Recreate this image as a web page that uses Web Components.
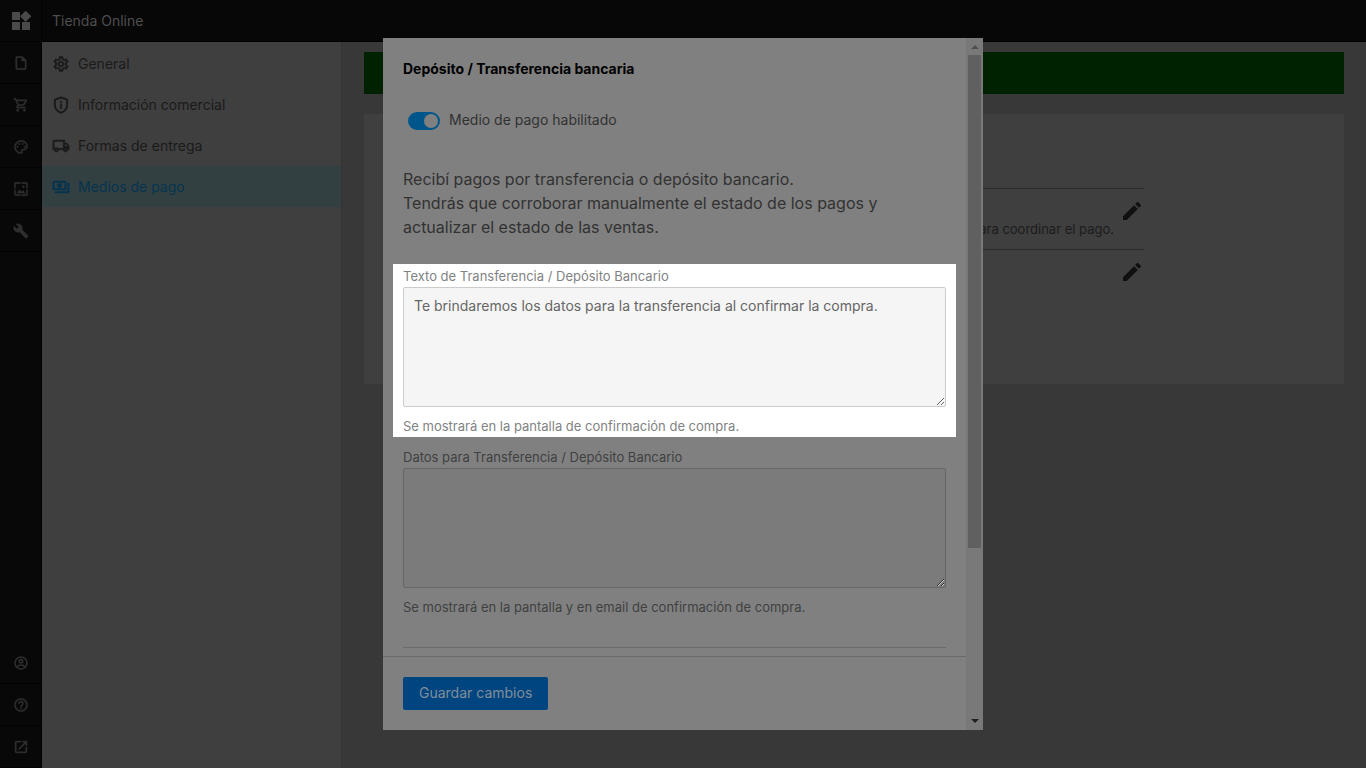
<!DOCTYPE html>
<html lang="es">
<head>
<meta charset="utf-8">
<meta name="viewport" content="width=device-width, initial-scale=1">
<title>Tienda Online</title>
<style>
html, body { margin: 0; height: 100%; }
body { font-family: Inter, "Liberation Sans", sans-serif; font-size: 14px; background: #383838; overflow: hidden; }
</style>
</head>
<body>
<store-admin></store-admin>
<script>
const ICONS = {
  widgets: '<path d="M13 13v8h8v-8h-8zM3 21h8v-8H3v8zM3 3v8h8V3H3zm13.66-1.31L11 7.34 16.66 13l5.66-5.66-5.66-5.65z"/>',
  file: '<path d="M14 2H6c-1.1 0-2 .9-2 2v16c0 1.1.89 2 1.99 2H18c1.1 0 2-.9 2-2V8l-6-6zM6 20V4h7v5h5v11H6z"/>',
  cart: '<path d="M15.55 13c.75 0 1.41-.41 1.75-1.03l3.58-6.49c.37-.66-.11-1.48-.87-1.48H5.21l-.94-2H1v2h2l3.6 7.59-1.35 2.44C4.52 15.37 5.48 17 7 17h12v-2H7l1.1-2h7.45zM6.16 6h12.15l-2.76 5H8.53L6.16 6z"/><circle cx="7" cy="20" r="2"/><circle cx="17" cy="20" r="2"/>',
  palette: '<path d="M12 22C6.49 22 2 17.51 2 12S6.49 2 12 2s10 4.04 10 9c0 3.31-2.69 6-6 6h-1.77c-.28 0-.5.22-.5.5 0 .12.05.23.13.33.41.47.64 1.06.64 1.67A2.5 2.5 0 0 1 12 22zm0-18c-4.41 0-8 3.59-8 8s3.59 8 8 8c.28 0 .5-.22.5-.5a.54.54 0 0 0-.14-.35c-.41-.46-.63-1.05-.63-1.65a2.5 2.5 0 0 1 2.5-2.5H16c2.21 0 4-1.79 4-4 0-3.86-3.59-7-8-7z"/><circle cx="6.5" cy="11.5" r="1.5"/><circle cx="9.5" cy="7.5" r="1.5"/><circle cx="14.5" cy="7.5" r="1.5"/><circle cx="17.5" cy="11.5" r="1.5"/>',
  wallpaper: '<path d="M4 4h7V2H4c-1.1 0-2 .9-2 2v7h2V4zm6 9l-4 5h12l-3-4-2.03 2.71L10 13zm7-4.5c0-.83-.67-1.5-1.5-1.5S14 7.67 14 8.5s.67 1.5 1.5 1.5S17 9.33 17 8.5zM20 2h-7v2h7v7h2V4c0-1.1-.9-2-2-2zm0 18h-7v2h7c1.1 0 2-.9 2-2v-7h-2v7zM4 13H2v7c0 1.1.9 2 2 2h7v-2H4v-7z"/>',
  build: '<path d="M22.7 19l-9.1-9.1c.9-2.3.4-5-1.5-6.9-2-2-5-2.4-7.4-1.3L9 6 6 9 1.6 4.7C.4 7.1.9 10.1 2.9 12.1c1.9 1.9 4.6 2.4 6.9 1.5l9.1 9.1c.4.4 1 .4 1.4 0l2.3-2.3c.5-.4.5-1.1.1-1.4z"/>',
  account: '<g fill="none" stroke="currentColor" stroke-width="2.4"><circle cx="12" cy="12" r="9"/><circle cx="12" cy="9.5" r="2.6"/><path d="M6 18c1.5-2 3.5-3 6-3s4.5 1 6 3"/></g>',
  help: '<path d="M11 18h2v-2h-2v2zm1-16C6.48 2 2 6.48 2 12s4.48 10 10 10 10-4.48 10-10S17.52 2 12 2zm0 18c-4.41 0-8-3.59-8-8s3.59-8 8-8 8 3.59 8 8-3.59 8-8 8zm0-14c-2.21 0-4 1.79-4 4h2c0-1.1.9-2 2-2s2 .9 2 2c0 2-3 1.75-3 5h2c0-2.25 3-2.5 3-5 0-2.21-1.79-4-4-4z"/>',
  open: '<path d="M19 19H5V5h7V3H5c-1.11 0-2 .9-2 2v14c0 1.1.89 2 2 2h14c1.1 0 2-.9 2-2v-7h-2v7zM14 3v2h3.59l-9.83 9.83 1.41 1.41L19 6.41V10h2V3h-7z"/>',
  gear: '<path d="M19.43 12.98c.04-.32.07-.64.07-.98s-.03-.66-.07-.98l2.11-1.65c.19-.15.24-.42.12-.64l-2-3.46c-.12-.22-.39-.3-.61-.22l-2.49 1c-.52-.4-1.08-.73-1.69-.98l-.38-2.65C14.46 2.18 14.25 2 14 2h-4c-.25 0-.46.18-.49.42l-.38 2.65c-.61.25-1.17.59-1.69.98l-2.49-1c-.23-.09-.49 0-.61.22l-2 3.46c-.13.22-.07.49.12.64l2.11 1.65c-.04.32-.07.65-.07.98s.03.66.07.98l-2.11 1.65c-.19.15-.24.42-.12.64l2 3.46c.12.22.39.3.61.22l2.49-1c.52.4 1.08.73 1.69.98l.38 2.65c.03.24.24.42.49.42h4c.25 0 .46-.18.49-.42l.38-2.65c.61-.25 1.17-.59 1.69-.98l2.49 1c.23.09.49 0 .61-.22l2-3.46c.12-.22.07-.49-.12-.64l-2.11-1.65zm-1.98-1.71c.04.31.05.52.05.73s-.02.43-.05.73l-.14 1.13 1.96 1.57-.87 1.52-2.11-.85-.93.71c-.43.32-.84.56-1.25.73l-1.06.43-.31 2.03h-1.48l-.3-2.03-1.06-.43c-.43-.18-.83-.41-1.23-.71l-.91-.7-2.11.82-.87-1.52 1.96-1.57-.14-1.13c-.03-.31-.05-.54-.05-.74s.02-.43.05-.73l.14-1.13L4.78 8.6l.87-1.52 2.11.85.91-.7c.42-.32.83-.56 1.25-.73l1.06-.43.3-2.07h1.48l.31 2.07 1.06.43c.43.18.83.41 1.23.71l.91.7 2.13-.83.87 1.52-1.96 1.55.14 1.12zM12 8c-2.21 0-4 1.79-4 4s1.79 4 4 4 4-1.79 4-4-1.79-4-4-4zm0 6c-1.1 0-2-.9-2-2s.9-2 2-2 2 .9 2 2-.9 2-2 2z"/>',
  shield: '<path fill="none" stroke="currentColor" stroke-width="2.6" d="M12 2 3.8 4.8v6.7c0 5 3.4 9 8.2 10.7 4.8-1.7 8.2-5.7 8.2-10.7V4.8z" stroke-linejoin="round"/><path d="M11 10.5h2V17h-2zM11 7h2v2h-2z"/>',
  truck: '<path d="M20 8h-3V4H3c-1.1 0-2 .9-2 2v11h2c0 1.66 1.34 3 3 3s3-1.34 3-3h6c0 1.66 1.34 3 3 3s3-1.34 3-3h2v-5l-3-4zm-.5 1.5 1.96 2.5H17V9.500h2.5zM6 18c-.55 0-1-.45-1-1s.45-1 1-1 1 .45 1 1-.45 1-1 1zm2.22-3c-.55-.61-1.33-1-2.22-1s-1.67.39-2.22 1H3V6h12v9H8.22zM18 18c-.55 0-1-.45-1-1s.45-1 1-1 1 .45 1 1-.45 1-1 1z"/>',
  payments: '<path d="M19 14V6c0-1.1-.9-2-2-2H3c-1.1 0-2 .9-2 2v8c0 1.1.9 2 2 2h14c1.1 0 2-.9 2-2zm-2 0H3V6h14v8zm-7-7c-1.66 0-3 1.34-3 3s1.34 3 3 3 3-1.34 3-3-1.34-3-3-3zm13 0v11c0 1.1-.9 2-2 2H4v-2h17V7h2z"/>',
  pencil: '<path d="M3 17.250V21h3.750L17.810 9.940l-3.750-3.750L3 17.250zM20.710 7.040c.39-.39.39-1.020 0-1.410l-2.340-2.340c-.39-.39-1.020-.39-1.410 0l-1.830 1.830 3.750 3.750 1.830-1.830z"/>'
};

const define = (name, css, html) => customElements.define(name, class extends HTMLElement {
  connectedCallback() {
    if (this.shadowRoot) return;
    const markup = typeof html === 'function' ? html(this) : html;
    this.attachShadow({ mode: 'open' }).innerHTML = `<style>*{box-sizing:border-box}${css}</style>${markup}`;
  }
});

define('ui-icon', `
  :host { display: block; width: var(--icon, 16px); height: var(--icon, 16px); flex: none; }
  svg { display: block; width: 100%; height: 100%; fill: currentColor; overflow: visible; }
  svg > path:not([fill]) { stroke: currentColor; stroke-width: var(--weight, 0); }
`, el => `<svg viewBox="0 0 24 24" aria-hidden="true">${ICONS[el.getAttribute('name')]}</svg>`);

define('rail-link', `
  :host { display: block; border-bottom: 1px solid #020202; color: #2e2e2e; }
  a { display: grid; place-items: center; height: 41px; color: inherit; }
  ui-icon { --icon: 16px; --weight: 0.6; }
  :host([brand]) { color: #4a4a4a; }
  :host([brand]) ui-icon { --icon: 24px; --weight: 0; }
`, el => `<a href="#" aria-label="${el.getAttribute('label')}"><ui-icon name="${el.getAttribute('icon')}"></ui-icon></a>`);

define('app-rail', `
  :host { display: flex; flex-direction: column; background: #080808; box-shadow: inset -1px 0 #020202; }
  .end { margin-top: auto; }
`, `
  <rail-link brand icon="widgets" label="Inicio"></rail-link>
  <rail-link icon="file" label="Páginas"></rail-link>
  <rail-link icon="cart" label="Ventas"></rail-link>
  <rail-link icon="palette" label="Diseño"></rail-link>
  <rail-link icon="wallpaper" label="Imágenes"></rail-link>
  <rail-link icon="build" label="Herramientas"></rail-link>
  <div class="end">
    <rail-link icon="account" label="Cuenta"></rail-link>
    <rail-link icon="help" label="Ayuda"></rail-link>
    <rail-link icon="open" label="Abrir"></rail-link>
  </div>`);

define('menu-link', `
  :host { display: block; color: #1a1a1a; }
  a { display: flex; align-items: center; gap: 8px; height: 41px; padding: 0 10px; color: inherit; text-decoration: none; }
  ui-icon { --icon: 18px; --weight: 0.6; }
  :host([active]) { background: #334041; color: #053450; }
`, el => `<a href="#"><ui-icon name="${el.getAttribute('icon')}"></ui-icon><slot></slot></a>`);

define('side-menu', `
  :host { display: block; background: #3f3f3f; border-right: 1px solid #333; }
  nav { padding-top: 1px; }
`, `<nav>
  <menu-link icon="gear">General</menu-link>
  <menu-link icon="shield">Información comercial</menu-link>
  <menu-link icon="truck">Formas de entrega</menu-link>
  <menu-link icon="payments" active>Medios de pago</menu-link>
</nav>`);

define('payment-row', `
  :host { display: flex; justify-content: flex-end; gap: 6px; height: 61px; border-top: 1px solid #2a2a2a; color: #1c1c1c; font-size: 13px; padding: 10px 0; }
  .note { align-self: flex-end; line-height: 20px; }
  button { border: 0; padding: 0; background: none; color: #101010; height: 24px; }
  ui-icon { --icon: 24px; }
`, `<span class="note"><slot></slot></span><button aria-label="Editar"><ui-icon name="pencil"></ui-icon></button>`);

define('payments-page', `
  :host { display: flex; flex-direction: column; gap: 20px; padding: 10px 22px; background: #383838; }
  .banner { height: 42px; background: #002200; }
  .card { height: 270px; padding: 74px 200px 0 20px; background: #3f3f3f; }
`, `<div class="banner"></div>
<div class="card">
  <payment-row>para coordinar el pago.</payment-row>
  <payment-row></payment-row>
</div>`);

define('toggle-switch', `
  :host { display: block; color: #323232; }
  label { display: flex; align-items: center; gap: 9px; padding-left: 5px; line-height: 24px; }
  input { appearance: none; margin: 2px 0 0; width: 32px; height: 18px; border-radius: 9px; background: #00568a; display: flex; align-items: center; justify-content: flex-end; padding: 2px; }
  input::before { content: ""; width: 14px; height: 14px; border-radius: 50%; background: #808080; }
`, `<label><input type="checkbox" role="switch" checked><span><slot></slot></span></label>`);

define('text-field', `
  :host { display: block; padding: 2px 10px 1px; margin: 0 -10px; color: #3f4141; font-size: 13px; line-height: 20px; --field: #7b7b7b; --line: #666; --ink: #333; }
  :host([spotlight]) { background: #fff; color: #7f8383; --field: #f5f5f5; --line: #ccc; --ink: #666; }
  label, p { display: block; margin: 0; }
  label { padding-bottom: 1px; }
  textarea { display: block; width: 100%; height: 120px; padding: 8px 10px; border: 1px solid var(--line); border-radius: 2px; background: var(--field); color: var(--ink); font: 14px/20px Inter, "Liberation Sans", sans-serif; resize: vertical; }
  p { padding-top: 9px; }
`, el => `<label for="field">${el.getAttribute('label')}</label>
<textarea id="field">${el.getAttribute('value') || ''}</textarea>
<p><slot></slot></p>`);

define('scroll-track', `
  :host { display: flex; flex-direction: column; align-items: center; width: 17px; background: #797979; color: #505050; }
  .cap { display: grid; place-items: center; height: 17px; }
  .thumb { width: 13px; flex: 492; background: #606060; }
  .rest { flex: 165; }
  svg { display: block; width: 8px; height: 4px; fill: currentColor; }
  .down { color: #202020; }
`, `<div class="cap"><svg viewBox="0 0 8 4"><path d="M0 4 4 0l4 4z"/></svg></div>
<div class="thumb"></div><div class="rest"></div>
<div class="cap down"><svg viewBox="0 0 8 4"><path d="M0 0h8L4 4z"/></svg></div>`);

define('payment-dialog', `
  :host { position: fixed; inset: 0; display: flex; align-items: center; justify-content: center; }
  section { display: grid; grid-template-columns: minmax(0, 1fr) auto; width: 100%; max-width: 600px; height: 90vh; background: #808080; }
  .pane { display: flex; flex-direction: column; min-height: 0; }
  .body { flex: 1; min-height: 0; overflow: hidden; padding: 20px; }
  h1 { margin: 0; font-size: 14px; line-height: 22px; font-weight: 700; color: #000; }
  toggle-switch { margin-top: 28px; }
  .intro { margin: 35px 0 25px; font-size: 16px; line-height: 24px; color: #323232; }
  text-field + text-field { margin-top: 8px; }
  hr { margin: 29px 0 0; border: 0; border-top: 1px solid #6b6b6b; }
  footer { padding: 20px; border-top: 1px solid #6b6b6b; }
  button { display: block; height: 33px; padding: 0 16px; border: 0; border-radius: 2px; background: #004580; color: #808e99; font: 14px/20px Inter, "Liberation Sans", sans-serif; }
`, `<section role="dialog" aria-labelledby="title">
  <div class="pane">
    <div class="body">
      <h1 id="title">Depósito / Transferencia bancaria</h1>
      <toggle-switch>Medio de pago habilitado</toggle-switch>
      <p class="intro">Recibí pagos por transferencia o depósito bancario.<br>Tendrás que corroborar manualmente el estado de los pagos y actualizar el estado de las ventas.</p>
      <text-field spotlight label="Texto de Transferencia / Depósito Bancario" value="Te brindaremos los datos para la transferencia al confirmar la compra.">Se mostrará en la pantalla de confirmación de compra.</text-field>
      <text-field label="Datos para Transferencia / Depósito Bancario">Se mostrará en la pantalla y en email de confirmación de compra.</text-field>
      <hr>
    </div>
    <footer><button type="button">Guardar cambios</button></footer>
  </div>
  <scroll-track></scroll-track>
</section>`);

define('store-admin', `
  :host { display: grid; grid-template-columns: 42px 300px minmax(0, 1fr); grid-template-rows: 42px 1fr; height: 100vh; }
  app-rail { grid-row: 1 / 3; }
  header { grid-column: 2 / 4; display: flex; align-items: center; padding: 0 10px; background: #070707; border-bottom: 1px solid #000; color: #4e4e4e; }
`, `<app-rail></app-rail>
<header>Tienda Online</header>
<side-menu></side-menu>
<payments-page></payments-page>
<payment-dialog></payment-dialog>`);
</script>
</body>
</html>
